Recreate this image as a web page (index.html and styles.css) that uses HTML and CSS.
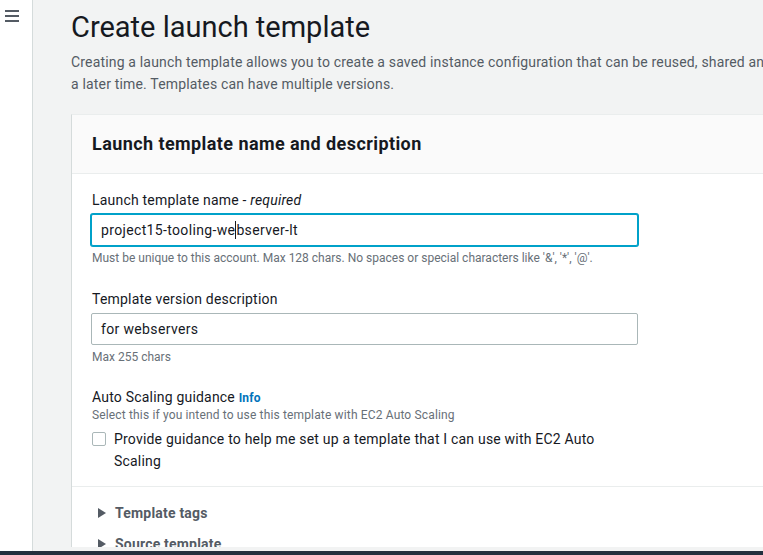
FILE: index.html
```html
<!DOCTYPE html>
<html lang="en">
<head>
<meta charset="utf-8">
<title>Create launch template</title>
<link rel="stylesheet" href="styles.css">
</head>
<body>
<div class="app">
  <div class="frame">
    <nav class="sidebar">
      <button class="burger" aria-label="Open navigation">
        <svg width="14" height="12" viewBox="0 0 14 12"><rect x="0" y="0" width="14" height="2"/><rect x="0" y="5" width="14" height="2"/><rect x="0" y="10" width="14" height="2"/></svg>
      </button>
    </nav>
    <main class="main">
      <div class="content">
        <h1 class="page-title">Create launch template</h1>
        <p class="page-desc">Creating a launch template allows you to create a saved instance configuration that can be reused, shared and launched at<br>a later time. Templates can have multiple versions.</p>

        <section class="card">
          <header class="card-header">
            <h2 class="card-title">Launch template name and description</h2>
          </header>
          <div class="card-body">
            <div class="field">
              <label class="field-label">Launch template name - <i>required</i></label>
              <div class="input is-focused">project15-tooling-we<span class="caret"></span>bserver-lt</div>
              <div class="hint">Must be unique to this account. Max 128 chars. No spaces or special characters like '&amp;', '*', '@'.</div>
            </div>
            <div class="field">
              <label class="field-label">Template version description</label>
              <div class="input">for webservers</div>
              <div class="hint">Max 255 chars</div>
            </div>
            <div class="field field-check">
              <label class="field-label">Auto Scaling guidance <a class="info">Info</a></label>
              <div class="hint">Select this if you intend to use this template with EC2 Auto Scaling</div>
              <div class="check-row">
                <span class="checkbox"></span>
                <span class="check-text">Provide guidance to help me set up a template that I can use with EC2 Auto Scaling</span>
              </div>
            </div>
          </div>
          <div class="expand-list">
            <div class="expand">
              <svg class="caret-icon" width="8" height="10" viewBox="0 0 8 10"><polygon points="0,0 8,5 0,10"/></svg>
              <span>Template tags</span>
            </div>
            <div class="expand">
              <svg class="caret-icon" width="8" height="10" viewBox="0 0 8 10"><polygon points="0,0 8,5 0,10"/></svg>
              <span>Source template</span>
            </div>
          </div>
        </section>
      </div>
    </main>
  </div>
  <div class="bottom-bar"></div>
</div>
</body>
</html>
```

FILE: styles.css
```css
* { box-sizing: border-box; }

html, body {
  margin: 0;
  padding: 0;
}

body {
  font-family: Roboto, "Liberation Sans", Arial, sans-serif;
  color: #16191f;
  background: #fff;
}

.app {
  display: flex;
  flex-direction: column;
  height: 555px;
  overflow: hidden;
}

.frame {
  display: flex;
  height: 551px;
}

.sidebar {
  flex: none;
  width: 33px;
  background: #fff;
  border-right: 1px solid #d5dbdb;
  padding: 10px 0 0 5px;
}

.burger {
  display: block;
  margin: 0;
  padding: 0;
  border: 0;
  background: none;
  line-height: 0;
}

.burger svg {
  fill: #545b64;
}

.main {
  flex: 1;
  min-width: 0;
  background: #f2f3f3;
  border-bottom: 4px solid #f2f3f3;
  overflow: hidden;
  padding: 9px 0 0 38px;
}

.content {
  width: 860px;
}

.page-title {
  margin: 0;
  font-size: 29px;
  font-weight: 400;
  line-height: 36px;
  color: #16191f;
}

.page-desc {
  margin: 6px 0 0;
  font-size: 14px;
  line-height: 22px;
  letter-spacing: 0.17px;
  color: #545b64;
}

.card {
  margin-top: 19px;
  background: #fff;
  border-top: 1px solid #eaeded;
  border-left: 1px solid #d5dbdb;
  width: 820px;
}

.card-header {
  background: #fafafa;
  border-bottom: 1px solid #eaeded;
  padding: 18px 20px;
}

.card-title {
  margin: 0;
  font-size: 18px;
  font-weight: 700;
  line-height: 22px;
  letter-spacing: 0.42px;
  color: #16191f;
}

.card-body {
  padding: 14px 20px 14px;
  border-bottom: 1px solid #eaeded;
}

.field + .field {
  margin-top: 21px;
}

.field + .field-check {
  margin-top: 20px;
}

.field-label {
  display: block;
  padding-top: 1px;
  font-size: 14px;
  line-height: 22px;
  letter-spacing: 0.2px;
  color: #16191f;
  margin-bottom: 3px;
}

.field-label i {
  font-style: italic;
}

.input {
  width: 547px;
  height: 32px;
  margin-left: -1px;
  border: 1px solid #aab7b8;
  border-radius: 2px;
  padding: 0 9px;
  font-size: 14px;
  line-height: 30px;
  letter-spacing: 0.35px;
  color: #16191f;
  background: #fff;
  white-space: nowrap;
}

.input.is-focused {
  border-color: #00a1c9;
  box-shadow: 0 0 0 1px #00a1c9;
}

.caret {
  display: inline-block;
  width: 1px;
  height: 18px;
  background: #16191f;
  vertical-align: -4px;
}

.hint {
  margin-top: 4px;
  font-size: 12px;
  line-height: 16px;
  color: #687078;
}

.field-label + .hint {
  margin-top: -5px;
  letter-spacing: 0.15px;
}

.info {
  font-size: 12px;
  font-weight: 700;
  letter-spacing: 0.2px;
  color: #0073bb;
  text-decoration: none;
}

.check-row {
  display: flex;
  align-items: flex-start;
  gap: 8px;
  width: 546px;
  margin-top: 5px;
}

.checkbox {
  flex: none;
  width: 14px;
  height: 14px;
  margin-top: 4px;
  border: 1px solid #aab7b8;
  border-radius: 2px;
  background: #fff;
}

.check-text {
  max-width: 500px;
  font-size: 14px;
  line-height: 22px;
  letter-spacing: 0.2px;
  color: #16191f;
}

.expand-list {
  padding: 15px 0 0 26px;
}

.expand {
  display: flex;
  align-items: center;
  gap: 9px;
  font-size: 14px;
  font-weight: 700;
  line-height: 22px;
  letter-spacing: 0.2px;
  color: #545b64;
}

.expand + .expand {
  margin-top: 9px;
}

.caret-icon {
  fill: #545b64;
  flex: none;
}

.bottom-bar {
  height: 4px;
  background: #232f3e;
}
```
